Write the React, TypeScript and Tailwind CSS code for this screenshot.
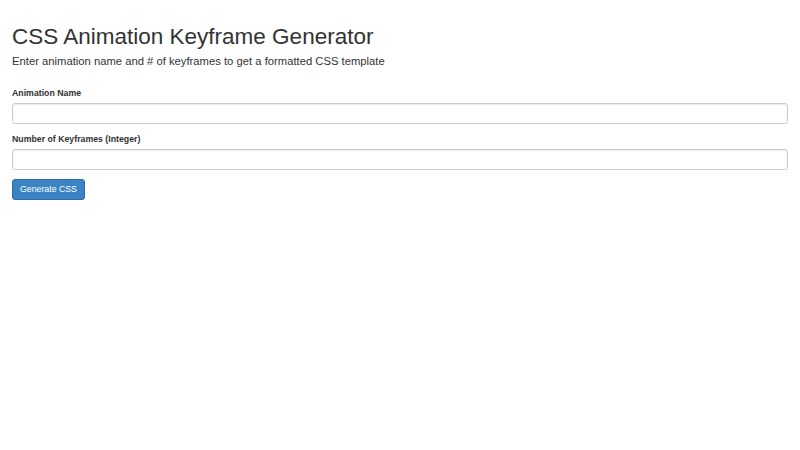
import React from 'react';

export default function App() {
  return (
    <div className="min-h-screen bg-white px-3 text-[#333] font-['Liberation_Sans',Arial,sans-serif]">
      <h1 className="pt-[24px] text-[22.5px] leading-[26px]">CSS Animation Keyframe Generator</h1>
      <p className="mt-[4px] text-[11.25px] leading-[14px]">
        Enter animation name and # of keyframes to get a formatted CSS template
      </p>

      <form className="mt-[19px]" onSubmit={(e) => e.preventDefault()}>
        <div className="mb-[9px]">
          <label className="mb-[4px] block text-[8.75px] font-bold leading-[12px]">Animation Name</label>
          <input
            type="text"
            className="block h-[21px] w-full rounded-[3px] border border-[#ccc] px-2 text-[8.75px] shadow-[inset_0_1px_1px_rgba(0,0,0,0.075)] outline-none"
          />
        </div>
        <div className="mb-[9px]">
          <label className="mb-[4px] block text-[8.75px] font-bold leading-[12px]">Number of Keyframes (Integer)</label>
          <input
            type="text"
            className="block h-[21px] w-full rounded-[3px] border border-[#ccc] px-2 text-[8.75px] shadow-[inset_0_1px_1px_rgba(0,0,0,0.075)] outline-none"
          />
        </div>
        <button
          type="submit"
          className="block h-[21px] w-[73px] rounded-[3px] border border-[#2e6da4] bg-[#3a84c4] text-[8.75px] text-white"
        >
          Generate CSS
        </button>
      </form>
    </div>
  );
}
